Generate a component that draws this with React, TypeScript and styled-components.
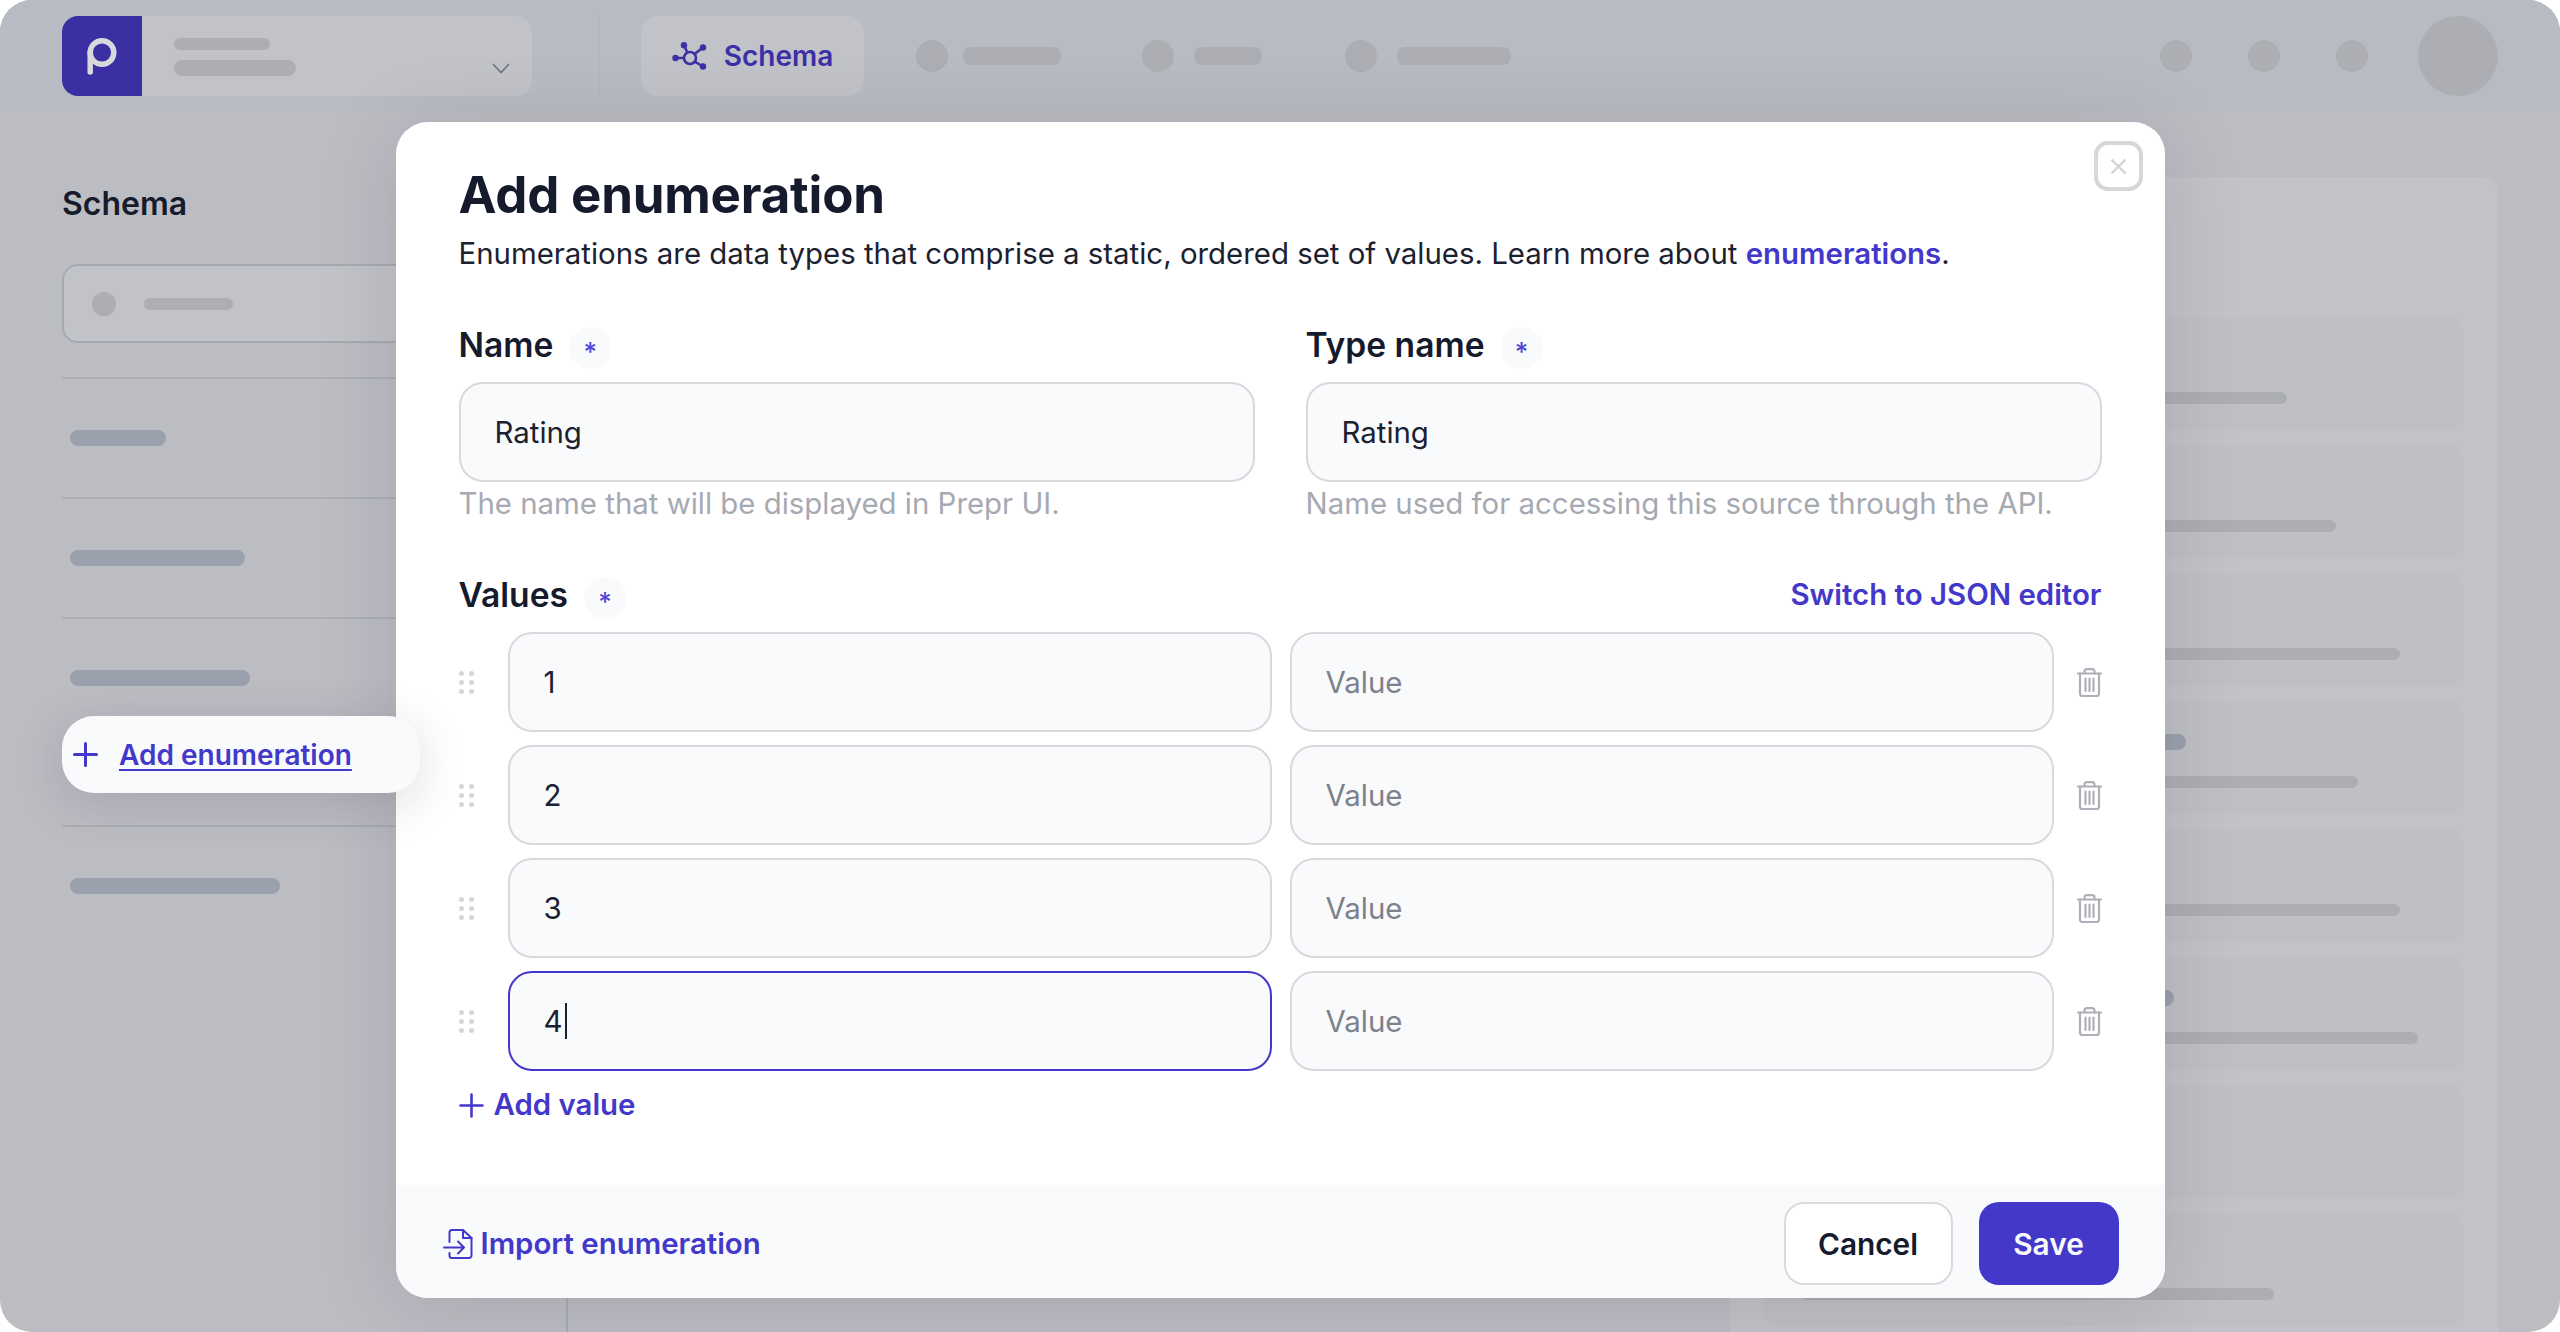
import React from 'react'
import styled, { createGlobalStyle } from 'styled-components'

const GlobalStyle = createGlobalStyle`
    html, body {
        margin: 0;
        background: #fff;
        font-family: Inter, "Liberation Sans", sans-serif;
    }
    * {
        box-sizing: border-box;
    }
`

const Page = styled.div`
    position: relative;
    width: 2560px;
    height: 1332px;
    overflow: hidden;
    display: flex;
    flex-direction: column;
    background: #bcbdc3;
    border-radius: 32px;
`

const Header = styled.header`
    height: 110px;
    flex-shrink: 0;
    padding: 16px 62px 14px;
    display: flex;
    align-items: center;
    background: #b8bbc3;
`

const Logo = styled.div`
    width: 80px;
    height: 80px;
    flex-shrink: 0;
    display: flex;
    align-items: center;
    justify-content: center;
    background: #3a30a3;
    border-radius: 16px 0 0 16px;
`

const ProjectSelect = styled.div`
    position: relative;
    width: 390px;
    height: 80px;
    padding: 22px 32px;
    display: flex;
    flex-direction: column;
    gap: 10px;
    background: #c1c3c8;
    border-radius: 0 16px 16px 0;
`

const Chevron = styled.svg`
    position: absolute;
    right: 22px;
    bottom: 22px;
`

const Placeholder = styled.div<{ $w: number; $h?: number; $color?: string }>`
    width: ${(p) => p.$w}px;
    height: ${(p) => p.$h ?? 16}px;
    flex-shrink: 0;
    background: ${(p) => p.$color ?? '#acaeb3'};
    border-radius: 8px;
`

const Dot = styled.div<{ $size: number }>`
    width: ${(p) => p.$size}px;
    height: ${(p) => p.$size}px;
    flex-shrink: 0;
    background: #acaeb3;
    border-radius: 50%;
`

const HeaderDivider = styled.div`
    width: 2px;
    height: 82px;
    margin: 0 41px 0 66px;
    background: #b5b8bf;
`

const ActiveTab = styled.div`
    width: 223px;
    height: 80px;
    display: flex;
    align-items: center;
    justify-content: center;
    gap: 16px;
    background: #c1c3c8;
    border-radius: 16px;
    color: #3b30a5;
    font-size: 28px;
    font-weight: 600;
`

const NavItem = styled.div<{ $ml: number; $gap: number }>`
    display: flex;
    align-items: center;
    gap: ${(p) => p.$gap}px;
    margin-left: ${(p) => p.$ml}px;
`

const HeaderRight = styled.div`
    margin-left: auto;
    display: flex;
    align-items: center;
`

const HeaderCircles = styled.div`
    display: flex;
    gap: 56px;
    margin-right: 50px;
`

const Body = styled.div`
    flex: 1;
    display: flex;
    min-height: 0;
`

const Sidebar = styled.aside`
    width: 568px;
    flex-shrink: 0;
    margin-top: 78px;
    padding-left: 62px;
    border-right: 2px solid #a9abb1;
`

const SidebarTitle = styled.h2`
    margin: 0 0 44px;
    height: 32px;
    font-size: 32px;
    line-height: 32px;
    font-weight: 600;
    color: #161b2b;
`

const SearchBox = styled.div`
    height: 79px;
    margin-bottom: 34px;
    padding: 0 28px;
    display: flex;
    align-items: center;
    gap: 28px;
    background: #c1c3c8;
    border: 2px solid #a7a9b0;
    border-right: none;
    border-radius: 16px 0 0 16px;
`

const SideRow = styled.div<{ $h: number }>`
    height: ${(p) => p.$h}px;
    padding: 51px 0 0 8px;
    border-top: 2px solid #adafb5;
`

const Main = styled.main`
    flex: 1;
`

const RightPanel = styled.section`
    width: 768px;
    margin: 67px 62px 0 0;
    padding: 141px 34px 0;
    display: flex;
    flex-direction: column;
    gap: 16px;
    background: #c2c3c8;
    border-radius: 16px 16px 0 0;
`

const PanelCard = styled.div`
    height: 112px;
    flex-shrink: 0;
    padding: 0 0 26px 36px;
    display: flex;
    flex-direction: column;
    justify-content: flex-end;
    gap: 26px;
    background: #bec0c5;
    border-radius: 14px;
`

const Overlay = styled.div`
    position: absolute;
    inset: 0;
    padding-top: 122px;
    display: flex;
    justify-content: center;
    align-items: flex-start;
`

const Modal = styled.div`
    position: relative;
    width: 1769px;
    height: 1176px;
    display: flex;
    flex-direction: column;
    overflow: hidden;
    background: #fff;
    border-radius: 32px;
`

const ModalShadow = styled.div`
    border-radius: 32px;
    box-shadow: 0 8px 80px rgba(20, 22, 40, 0.13);
`

const CloseButton = styled.button`
    position: absolute;
    top: 19px;
    right: 22px;
    width: 49px;
    height: 50px;
    padding: 0;
    display: flex;
    align-items: center;
    justify-content: center;
    background: #fff;
    border: 4px solid #d6d7da;
    border-radius: 14px;
`

const ModalContent = styled.div`
    flex: 1;
    padding: 42px 63px 0;
`

const Title = styled.h1`
    margin: 0;
    font-size: 51px;
    line-height: 62px;
    font-weight: 700;
    letter-spacing: -0.2px;
    color: #151a2c;
`

const Description = styled.p`
    margin: 10px 0 0;
    font-size: 29.4px;
    line-height: 36px;
    color: #1c2130;
`

const TextLink = styled.a`
    color: #4338ca;
    font-weight: 600;
    text-decoration: none;
`

const FieldGrid = styled.div`
    margin-top: 52px;
    display: grid;
    grid-template-columns: 796px 796px;
    column-gap: 51px;
`

const LabelRow = styled.div`
    height: 42px;
    display: flex;
    align-items: center;
    justify-content: space-between;
`

const LabelGroup = styled.div`
    display: flex;
    align-items: center;
    gap: 16px;
`

const Label = styled.label`
    font-size: 33.6px;
    line-height: 42px;
    font-weight: 600;
    color: #151a2c;
`

const Required = styled.span`
    width: 42px;
    height: 42px;
    margin-top: 6px;
    display: flex;
    align-items: center;
    justify-content: center;
    padding-top: 8px;
    background: #f8fafc;
    border-radius: 50%;
    color: #4f46d8;
    font-size: 26px;
    line-height: 26px;
    font-weight: 500;
`

const TextBox = styled.div<{ $focused?: boolean; $placeholder?: boolean }>`
    height: 100px;
    padding-left: 34px;
    display: flex;
    align-items: center;
    background: #f8fafc;
    border: 2px solid ${(p) => (p.$focused ? '#4338ca' : '#d7d9dc')};
    border-radius: 24px;
    font-size: 29.4px;
    color: ${(p) => (p.$placeholder ? '#7d818c' : '#1c2130')};
`

const NameBox = styled(TextBox)`
    margin-top: 16px;
`

const Caret = styled.span`
    width: 2px;
    height: 36px;
    margin-left: 2px;
    background: #1c2130;
`

const Helper = styled.div`
    margin-top: 4px;
    font-size: 29.4px;
    line-height: 36px;
    color: #a6a9b2;
`

const ValuesSection = styled.div`
    margin-top: 52px;
`

const ValueRows = styled.div`
    margin-top: 16px;
    display: flex;
    flex-direction: column;
    gap: 13px;
`

const ValueRow = styled.div`
    display: flex;
    align-items: center;
`

const DragHandle = styled.div`
    width: 15px;
    margin-right: 34px;
    display: grid;
    grid-template-columns: 5px 5px;
    justify-content: space-between;
    row-gap: 4px;
    flex-shrink: 0;
`

const DragDot = styled.span`
    width: 5px;
    height: 5px;
    background: #d5d6d9;
    border-radius: 50%;
`

const ValueBoxes = styled.div`
    display: grid;
    grid-template-columns: 764px 764px;
    column-gap: 18px;
    margin-right: 23px;
`

const ActionLink = styled.a`
    display: inline-flex;
    align-items: center;
    color: #4338ca;
    font-size: 29.4px;
    line-height: 36px;
    font-weight: 600;
`

const AddValue = styled(ActionLink)`
    margin-top: 16px;
    gap: 10px;
`

const ModalFooter = styled.footer`
    height: 113px;
    flex-shrink: 0;
    padding: 17px 46px 13px 47px;
    display: flex;
    align-items: center;
    justify-content: space-between;
    background: #f8fafc;
`

const ImportLink = styled(ActionLink)`
    gap: 8px;
`

const FooterButtons = styled.div`
    display: flex;
    gap: 26px;
`

const Button = styled.button<{ $primary?: boolean }>`
    width: ${(p) => (p.$primary ? 140 : 169)}px;
    height: 83px;
    padding: 0;
    background: ${(p) => (p.$primary ? '#4338ca' : '#fff')};
    border: ${(p) => (p.$primary ? 'none' : '2px solid #d9dadd')};
    border-radius: 20px;
    color: ${(p) => (p.$primary ? '#f8fafc' : '#151a2c')};
    font-family: inherit;
    font-size: 29.8px;
    font-weight: 600;
`

const Callout = styled.div`
    position: absolute;
    left: 62px;
    top: 716px;
    width: 358px;
    height: 77px;
    padding-left: 11px;
    display: flex;
    align-items: center;
    gap: 21px;
    background: #f8fafc;
    border-radius: 32px;
    box-shadow: 0 10px 50px rgba(20, 22, 40, 0.14);
`

const CalloutLink = styled.a`
    color: #4338ca;
    font-size: 28px;
    line-height: 36px;
    font-weight: 600;
    text-decoration: underline;
    text-underline-offset: 4px;
    text-decoration-thickness: 2px;
`

const PlusIcon = ({ weight }: { weight: number }) => (
    <svg width="25" height="25" viewBox="0 0 25 25" fill="none" stroke="#4338ca" strokeWidth={weight} strokeLinecap="round">
        <path d="M12.5 1.5v22M1.5 12.5h22" />
    </svg>
)

const TrashIcon = () => (
    <svg width="25" height="29" viewBox="0 0 25 29" fill="none" stroke="#adb0b8" strokeWidth="2.2" strokeLinecap="round" strokeLinejoin="round">
        <path d="M1 5.5h23" />
        <path d="M7.5 5.5V3.6a2.4 2.4 0 0 1 2.4-2.4h5.2a2.4 2.4 0 0 1 2.4 2.4v1.9" />
        <path d="M3 5.5v20.3a2.2 2.2 0 0 0 2.2 2.2h14.6a2.2 2.2 0 0 0 2.2-2.2V5.5" />
        <path d="M8.5 10.5v12.5M12.5 10.5v12.5M16.5 10.5v12.5" />
    </svg>
)

const ImportIcon = () => (
    <svg width="30" height="30" viewBox="0 0 30 30" fill="none" stroke="#4338ca" strokeWidth="2" strokeLinecap="round" strokeLinejoin="round">
        <path d="M6.5 13V3.5A2.5 2.5 0 0 1 9 1h11l8.5 8v17.5A2.5 2.5 0 0 1 26 29H9a2.5 2.5 0 0 1-2.5-2.5V24" />
        <path d="M20 1v8h8.5" />
        <path d="M1 18.5h20M15 12.5l6 6-6 6" />
    </svg>
)

const SchemaIcon = () => (
    <svg width="36" height="28" viewBox="0 0 36 28" fill="none" stroke="#3b30a5" strokeWidth="2.6">
        <circle cx="18" cy="16" r="6" />
        <path d="M3.5 16H12M12 3l3.5 8M31 5.5l-8.5 6.5M31 24.5l-8.5-5" />
        <g fill="#3b30a5" stroke="none">
            <circle cx="3.5" cy="16" r="3.2" />
            <circle cx="12" cy="3.2" r="3.2" />
            <circle cx="31" cy="5.5" r="3.2" />
            <circle cx="31" cy="24.5" r="3.2" />
        </g>
    </svg>
)

const values = ['1', '2', '3', '4']

const cards = [
    { bar: 487 },
    { bar: 536 },
    { bar: 600 },
    { chip: 386, bar: 558 },
    { bar: 600 },
    { chip: 374, bar: 618 },
    {},
    { bar: 474 },
]

const App = () => {
    return (
        <>
            <GlobalStyle />
            <Page>
                <Header>
                    <Logo>
                        <svg width="80" height="80" viewBox="0 0 80 80" fill="none" stroke="#d8d9dd" strokeWidth="5.5" strokeLinecap="round">
                            <circle cx="40" cy="36.5" r="11.8" />
                            <path d="M28.2 36.5V56" />
                        </svg>
                    </Logo>
                    <ProjectSelect>
                        <Placeholder $w={96} $h={12} />
                        <Placeholder $w={122} />
                        <Chevron width="18" height="11" viewBox="0 0 18 11" fill="none" stroke="#6f727a" strokeWidth="1.6">
                            <path d="M1 1l8 8.5L17 1" />
                        </Chevron>
                    </ProjectSelect>
                    <HeaderDivider />
                    <ActiveTab>
                        <SchemaIcon />
                        Schema
                    </ActiveTab>
                    <NavItem $ml={52} $gap={15}>
                        <Dot $size={32} />
                        <Placeholder $w={98} $h={18} />
                    </NavItem>
                    <NavItem $ml={81} $gap={20}>
                        <Dot $size={32} />
                        <Placeholder $w={68} $h={18} />
                    </NavItem>
                    <NavItem $ml={83} $gap={20}>
                        <Dot $size={32} />
                        <Placeholder $w={114} $h={18} />
                    </NavItem>
                    <HeaderRight>
                        <HeaderCircles>
                            <Dot $size={32} />
                            <Dot $size={32} />
                            <Dot $size={32} />
                        </HeaderCircles>
                        <Dot $size={80} />
                    </HeaderRight>
                </Header>
                <Body>
                    <Sidebar>
                        <SidebarTitle>Schema</SidebarTitle>
                        <SearchBox>
                            <Dot $size={24} />
                            <Placeholder $w={89} $h={12} />
                        </SearchBox>
                        <SideRow $h={120}>
                            <Placeholder $w={96} $color="#9aa1ad" />
                        </SideRow>
                        <SideRow $h={120}>
                            <Placeholder $w={175} $color="#9aa1ad" />
                        </SideRow>
                        <SideRow $h={208}>
                            <Placeholder $w={180} $color="#9aa1ad" />
                        </SideRow>
                        <SideRow $h={120}>
                            <Placeholder $w={210} $color="#9aa1ad" />
                        </SideRow>
                    </Sidebar>
                    <Main />
                    <RightPanel>
                        {cards.map((card, i) => (
                            <PanelCard key={i}>
                                {card.chip && <Placeholder $w={card.chip} $color="#9aa1ad" />}
                                {card.bar && <Placeholder $w={card.bar} $h={12} />}
                            </PanelCard>
                        ))}
                    </RightPanel>
                </Body>
                <Overlay>
                    <ModalShadow>
                        <Modal>
                            <CloseButton>
                                <svg width="17" height="17" viewBox="0 0 17 17" fill="none" stroke="#d2d3d7" strokeWidth="2.4">
                                    <path d="M1.5 1.5l14 14M15.5 1.5l-14 14" />
                                </svg>
                            </CloseButton>
                            <ModalContent>
                                <Title>Add enumeration</Title>
                                <Description>
                                    Enumerations are data types that comprise a static, ordered set of values. Learn more about{' '}
                                    <TextLink>enumerations</TextLink>.
                                </Description>
                                <FieldGrid>
                                    <div>
                                        <LabelRow>
                                            <LabelGroup>
                                                <Label>Name</Label>
                                                <Required>*</Required>
                                            </LabelGroup>
                                        </LabelRow>
                                        <NameBox>Rating</NameBox>
                                        <Helper>The name that will be displayed in Prepr UI.</Helper>
                                    </div>
                                    <div>
                                        <LabelRow>
                                            <LabelGroup>
                                                <Label>Type name</Label>
                                                <Required>*</Required>
                                            </LabelGroup>
                                        </LabelRow>
                                        <NameBox>Rating</NameBox>
                                        <Helper>Name used for accessing this source through the API.</Helper>
                                    </div>
                                </FieldGrid>
                                <ValuesSection>
                                    <LabelRow>
                                        <LabelGroup>
                                            <Label>Values</Label>
                                            <Required>*</Required>
                                        </LabelGroup>
                                        <ActionLink>Switch to JSON editor</ActionLink>
                                    </LabelRow>
                                    <ValueRows>
                                        {values.map((value, i) => (
                                            <ValueRow key={value}>
                                                <DragHandle>
                                                    {[0, 1, 2, 3, 4, 5].map((d) => (
                                                        <DragDot key={d} />
                                                    ))}
                                                </DragHandle>
                                                <ValueBoxes>
                                                    <TextBox $focused={i === 3}>
                                                        {value}
                                                        {i === 3 && <Caret />}
                                                    </TextBox>
                                                    <TextBox $placeholder>Value</TextBox>
                                                </ValueBoxes>
                                                <TrashIcon />
                                            </ValueRow>
                                        ))}
                                    </ValueRows>
                                    <AddValue>
                                        <PlusIcon weight={2.6} />
                                        Add value
                                    </AddValue>
                                </ValuesSection>
                            </ModalContent>
                            <ModalFooter>
                                <ImportLink>
                                    <ImportIcon />
                                    Import enumeration
                                </ImportLink>
                                <FooterButtons>
                                    <Button>Cancel</Button>
                                    <Button $primary>Save</Button>
                                </FooterButtons>
                            </ModalFooter>
                        </Modal>
                    </ModalShadow>
                </Overlay>
                <Callout>
                    <PlusIcon weight={3} />
                    <CalloutLink>Add enumeration</CalloutLink>
                </Callout>
            </Page>
        </>
    )
}

export default App
